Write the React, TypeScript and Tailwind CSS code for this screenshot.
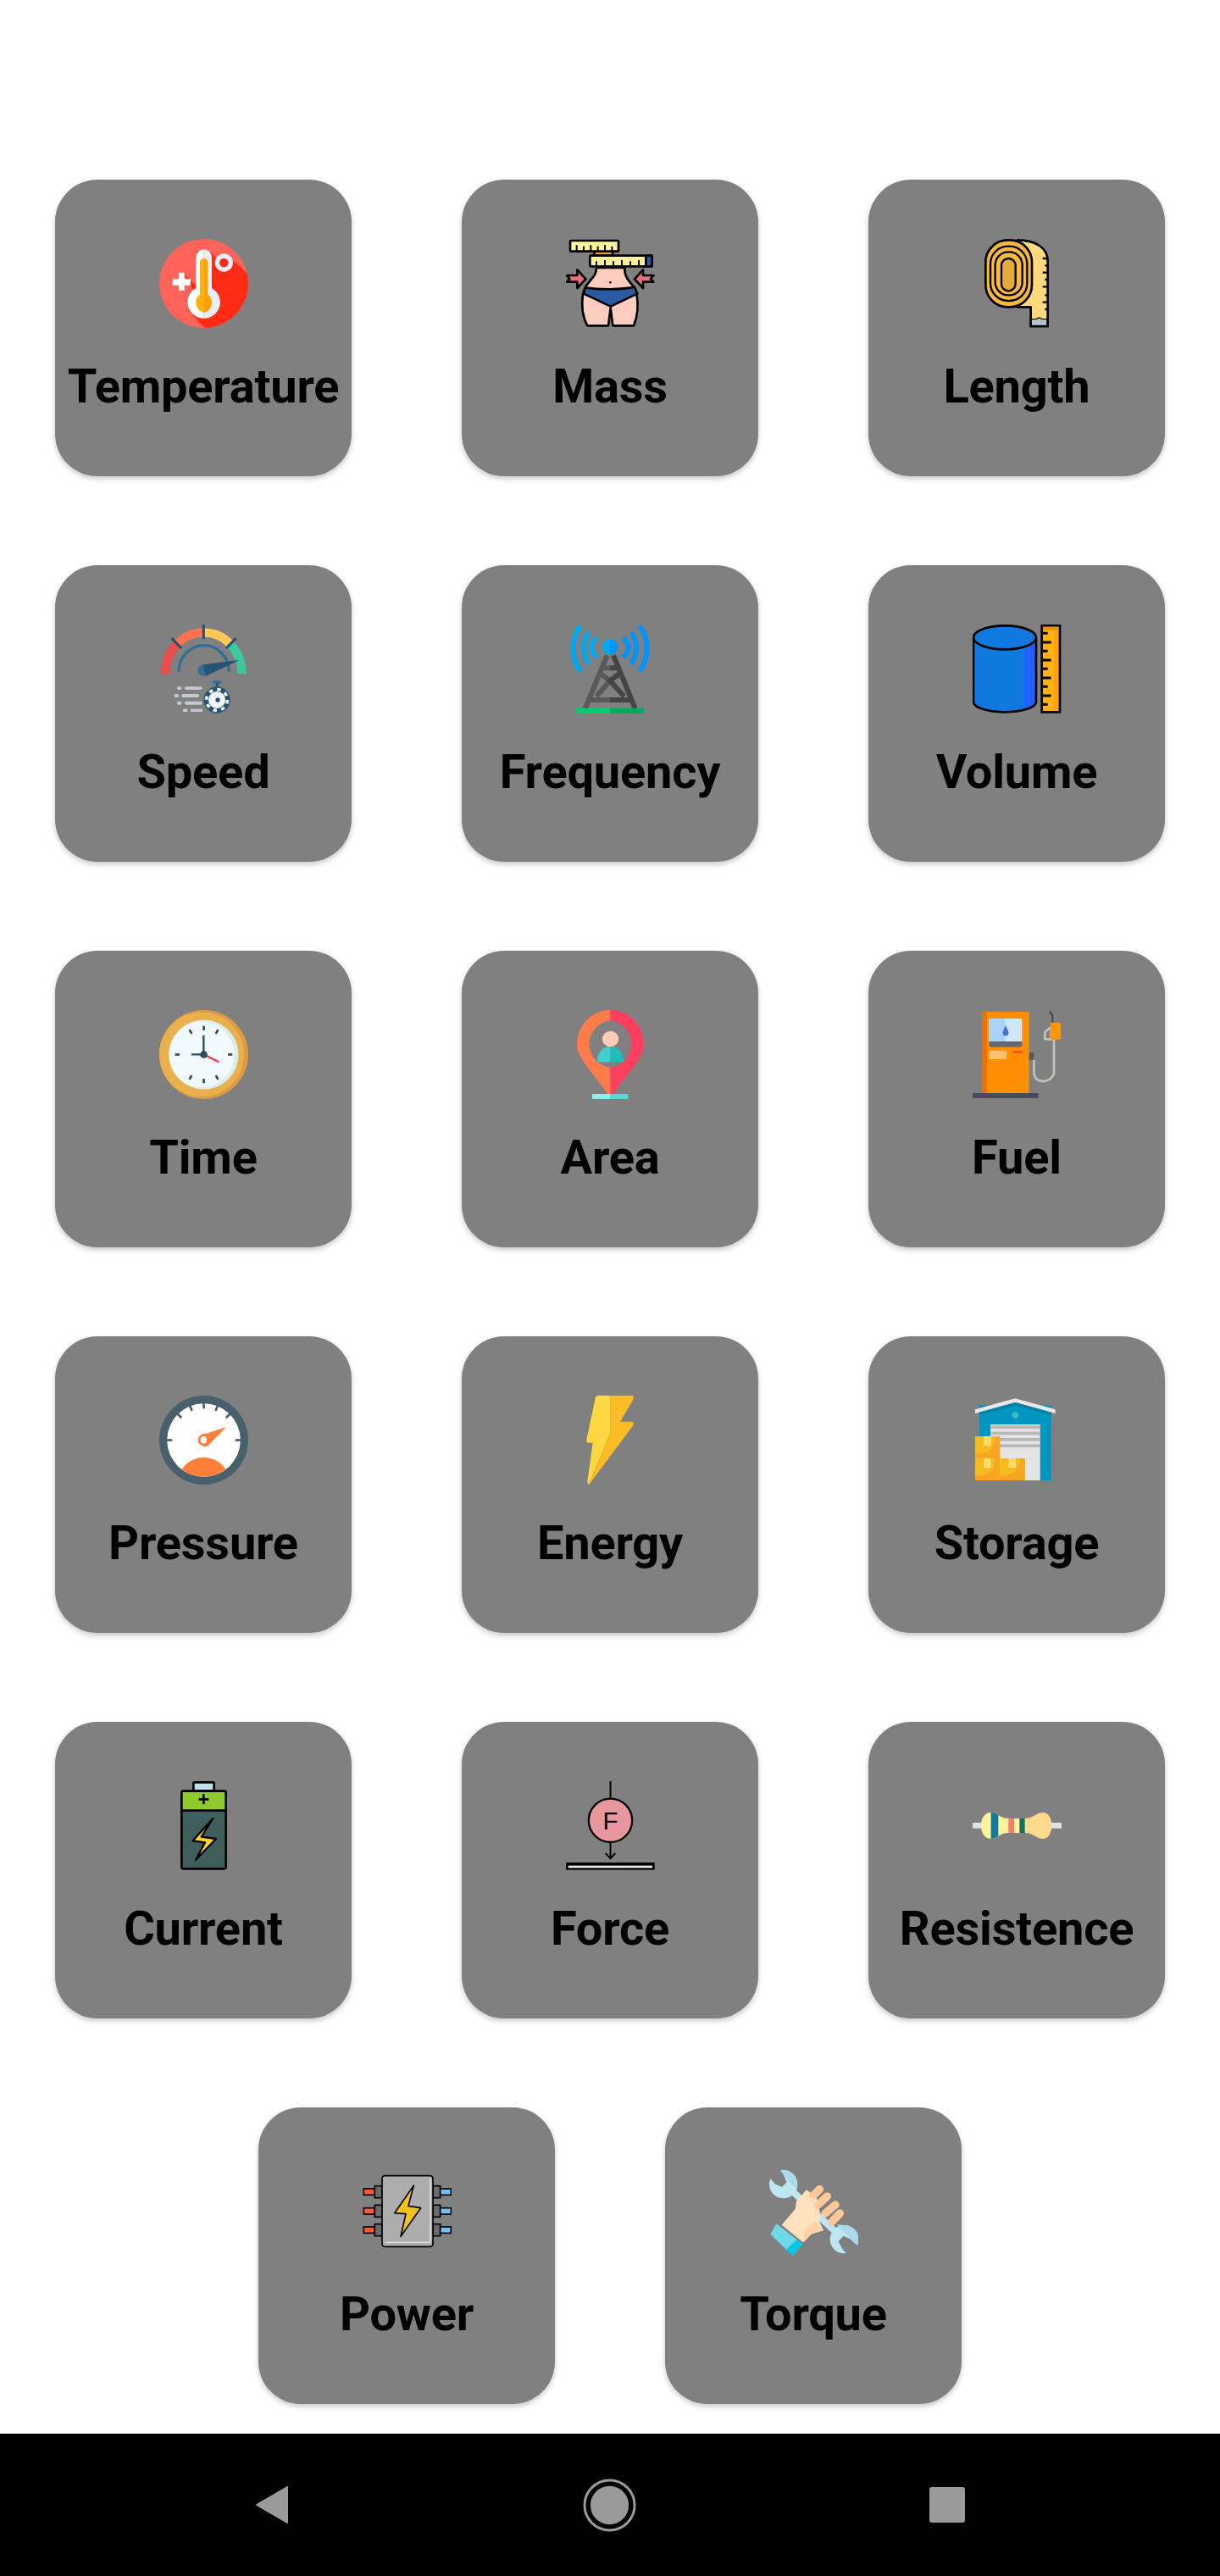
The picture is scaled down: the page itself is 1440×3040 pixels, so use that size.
import type { ReactNode } from "react";

const Svg = ({ vb = "0 0 315 315", children }: { vb?: string; children: ReactNode }) => (
  <svg viewBox={vb} className="w-[105px] h-[105px] block">{children}</svg>
);

const Thermo = () => (
  <Svg vb="81 66 315 315">
    <defs><clipPath id="thc"><circle cx="238.5" cy="223.5" r="157.5" /></clipPath></defs>
    <circle cx="238.5" cy="223.5" r="157.5" fill="#ff6359" />
    <path clipPath="url(#thc)" d="M250 390L185 320L200 245L165 187L212 232L212 110L262 112L288 138L310 120L340 140L400 195L420 390Z" fill="#ff2b14" />
    <path d="M211 290V131a28 28 0 0 1 28-28V347a57 57 0 0 1-28-107Z" fill="#fff" />
    <path d="M239 103a28 28 0 0 1 28 28V240a57 57 0 0 1-28 107Z" fill="#e9edf5" />
    <path d="M225 262V149a14 14 0 0 1 14-14V327a37 37 0 0 1-14-65Z" fill="#ffb20c" />
    <path d="M239 135a14 14 0 0 1 14 14V262a37 37 0 0 1-14 65Z" fill="#ff9f00" />
    <circle cx="310" cy="150" r="24" fill="#ff2b14" stroke="#e9edf5" strokeWidth="16" />
    <path d="M128 208h22v-23h20v23h22v22h-22v18h-20v-18h-22Z" fill="#fff" />
  </Svg>
);

const Mass = () => (
  <Svg vb="82 96 315 315">
    <g stroke="#000" strokeWidth="8" strokeLinejoin="round">
      <path d="M190 198C190 230 165 240 150 268L142 290C135 340 145 380 158 403H232L240 340L248 403H322C335 370 340 330 332 290L322 266C300 240 288 225 290 198Z" fill="#ffcdbf" />
      <path d="M150 268C200 276 280 276 325 266L335 290L240 335L145 290Z" fill="#2c5aa0" />
      <path d="M85 225H122V205L152 238L122 270V248H85L95 237Z" fill="#e66f80" />
      <path d="M392 225H355V205L325 238L355 270V248H392L382 237Z" fill="#e66f80" />
      <path d="M185 140H250L245 155H180Z" fill="#f0a030" />
      <rect x="97" y="102" width="171" height="38" rx="3" fill="#fff39a" />
      <rect x="167" y="155" width="220" height="38" rx="3" fill="#fff39a" />
      <rect x="365" y="155" width="22" height="38" fill="#2c5aa0" />
      <path d="M120 138V118M145 138V122M170 138V118M195 138V122M220 138V118M245 138V122M190 191V175M220 191V171M250 191V175M280 191V171M310 191V175M340 191V171" fill="none" strokeWidth="6" />
    </g>
    <circle cx="239" cy="250" r="4" fill="#000" />
  </Svg>
);

const Length = () => (
  <Svg vb="112 96 315 315">
    <path d="M270 100C340 100 378 130 378 175V405H318V337H270Z" fill="#ffd97a" stroke="#000" strokeWidth="8" strokeLinejoin="round" />
    <rect x="158" y="100" width="164" height="237" rx="78" fill="#f8b93d" stroke="#000" strokeWidth="8" />
    <rect x="175" y="122" width="130" height="193" rx="62" fill="#f8b93d" stroke="#000" strokeWidth="7" />
    <rect x="192" y="142" width="96" height="153" rx="46" fill="#f8b93d" stroke="#000" strokeWidth="7" />
    <rect x="214" y="165" width="50" height="115" rx="25" fill="#e5ab3a" stroke="#000" strokeWidth="7" />
    <path d="M360 165H378M368 190H378M360 215H378M368 240H378M360 265H378M368 295H378M360 320H378M368 345H378" stroke="#000" strokeWidth="7" />
    <path d="M322 385H338L348 378L358 385H374V403H322Z" fill="#b0c4d4" />
    <path d="M318 378V405H378V378" fill="none" stroke="#000" strokeWidth="8" />
    <path d="M322 380H338L348 374L358 380H374" fill="none" stroke="#000" strokeWidth="4" />
  </Svg>
);

const Speed = () => (
  <Svg vb="81 51 315 315">
    <g fill="none" strokeWidth="31">
      <path d="M102 225A136 146 0 0 1 142 122" stroke="#ee4b4b" />
      <path d="M142 122A136 146 0 0 1 238 79" stroke="#ff7350" />
      <path d="M238 79A136 146 0 0 1 334 122" stroke="#ffc857" />
      <path d="M334 122A136 146 0 0 1 374 225" stroke="#3cc9a0" />
    </g>
    <path d="M125 100L160 135M238 52V102M352 100L318 135" stroke="#234e6d" strokeWidth="9" />
    <path d="M150 218A88 92 0 0 1 328 218" fill="none" stroke="#336e96" strokeWidth="10" />
    <circle cx="238" cy="213" r="20" fill="#336e96" />
    <path d="M236 193L365 177L246 233Z" fill="#265474" />
    <g fill="#c4c9d1">
      <rect x="144" y="271" width="16" height="11" rx="5" />
      <rect x="171" y="271" width="62" height="11" rx="5" />
      <rect x="134" y="297" width="16" height="12" rx="5" />
      <rect x="160" y="297" width="62" height="12" rx="5" />
      <rect x="144" y="323" width="16" height="12" rx="5" />
      <rect x="171" y="323" width="62" height="12" rx="5" />
      <rect x="165" y="350" width="16" height="10" />
      <rect x="192" y="350" width="42" height="10" />
    </g>
    <rect x="270" y="250" width="31" height="10" rx="4" fill="#336e96" />
    <rect x="281" y="258" width="9" height="16" fill="#265474" />
    <circle cx="285" cy="318" r="47" fill="#265474" />
    <circle cx="285" cy="318" r="30" fill="#f1f4f8" />
    <circle cx="285" cy="318" r="37" fill="none" stroke="#f1f4f8" strokeWidth="11" strokeDasharray="13 16" />
    <circle cx="288" cy="318" r="8" fill="#265474" />
  </Svg>
);

const Freq = () => (
  <Svg vb="82 51 315 315">
    <g fill="none" strokeWidth="18" strokeLinecap="butt">
      <path d="M285 98Q321 133 285 168M313 78Q349 135 313 192M343 55Q395 135 343 218" stroke="#0094ff" />
      <path d="M191 98Q155 133 191 168M163 78Q127 135 163 192M133 55Q81 135 133 218" stroke="#00a8f0" />
    </g>
    <path d="M228 160L150 348M238 205H215M238 318H170M205 225L238 250L190 305" fill="none" stroke="#595959" strokeWidth="18" />
    <path d="M250 160L327 348M238 205H262M238 318H308M272 225L238 250L288 305" fill="none" stroke="#454545" strokeWidth="18" />
    <path d="M238 102a28 28 0 0 0 0 56Z" fill="#00a8f0" />
    <path d="M238 102a28 28 0 0 1 0 56Z" fill="#0094ff" />
    <rect x="118" y="348" width="120" height="18" fill="#00cc70" />
    <rect x="238" y="348" width="120" height="18" fill="#00ab60" />
  </Svg>
);

const Volume = () => (
  <Svg vb="112 51 315 315">
    <path d="M115 97V325C115 345 165 361 226 361C287 361 337 345 337 325V97Z" fill="#0f79e0" />
    <path d="M295 110H337V325C337 337 320 348 295 354Z" fill="#2060ff" />
    <path d="M115 97V325C115 345 165 361 226 361C287 361 337 345 337 325V97" fill="none" stroke="#000" strokeWidth="8" />
    <ellipse cx="226" cy="97" rx="111" ry="42" fill="#0f79e0" stroke="#000" strokeWidth="8" />
    <rect x="357" y="55" width="64" height="306" fill="#ffb211" />
    <rect x="400" y="55" width="21" height="306" fill="#ffa010" />
    <rect x="357" y="55" width="64" height="306" fill="none" stroke="#000" strokeWidth="8" />
    <rect x="361" y="59" width="56" height="12" fill="#e8900f" />
    <path d="M360 82H378M360 114H390M360 145H378M360 177H390M360 208H378M360 240H390M360 271H378M360 303H390M360 334H378" stroke="#000" strokeWidth="9" />
  </Svg>
);

const Time = () => (
  <Svg>
    <circle cx="157.5" cy="157.5" r="157.5" fill="#e09a45" />
    <circle cx="150" cy="157.5" r="150" fill="#eab04c" />
    <circle cx="157.5" cy="157.5" r="123" fill="#d8eef0" />
    <circle cx="150" cy="157.5" r="116" fill="#f3faff" />
    <g stroke="#2d4a63">
      {[0, 30, 90, 150, 180, 210, 270, 330].map((a) => (
        <line key={a} x1="157.5" y1="56" x2="157.5" y2="72" strokeWidth="8" transform={`rotate(${a} 157.5 157.5)`} />
      ))}
    </g>
    <path d="M157 157L211 184" stroke="#e04656" strokeWidth="7" />
    <path d="M157 89V157M114 157H157" stroke="#2d4a63" strokeWidth="7" />
    <circle cx="157.5" cy="157.5" r="13" fill="#2d4a63" />
  </Svg>
);

const Area = () => (
  <Svg>
    <path fillRule="evenodd" d="M157.5 0C90 0 39 55 39 124C39 170 110 240 150 300H157.5ZM157.5 37A84 84 0 0 0 157.5 204Z" fill="#ff7b4a" />
    <path fillRule="evenodd" d="M157.5 0C225 0 276 55 276 124C276 170 205 240 165 300H157.5ZM157.5 37A84 84 0 0 1 157.5 204Z" fill="#ff3f5f" />
    <ellipse cx="157.5" cy="102" rx="29" ry="28" fill="#ffcbb8" />
    <path d="M157.5 129C130 129 111 150 111 184H157.5Z" fill="#3fcfcf" />
    <path d="M157.5 129C185 129 204 150 204 184H157.5Z" fill="#22bcbc" />
    <rect x="93" y="297" width="65" height="18" rx="3" fill="#8cf0ee" />
    <rect x="157.5" y="297" width="63" height="18" rx="3" fill="#55d8d8" />
  </Svg>
);

const Fuel = () => (
  <Svg>
    <path d="M217 176V220C217 262 275 262 288 225V104" fill="none" stroke="#c2c2bc" strokeWidth="8" />
    <path d="M273 4L283 20V44" fill="none" stroke="#4a4a58" strokeWidth="7" />
    <path d="M256 102V78L278 60V104Z" fill="none" stroke="#c2c2bc" strokeWidth="8" />
    <rect x="276" y="44" width="36" height="60" rx="5" fill="#ff9500" />
    <rect x="35" y="6" width="165" height="288" rx="5" fill="#ff8f00" />
    <rect x="35" y="6" width="16" height="288" fill="#f07000" />
    <rect x="58" y="30" width="117" height="90" rx="6" fill="#cfe7fb" />
    <rect x="58" y="30" width="57" height="90" rx="6" fill="#a8d4f7" />
    <path d="M58 111H175V122a9 9 0 0 1-9 9H67a9 9 0 0 1-9-9Z" fill="#646875" />
    <path d="M117 54C108 74 104 80 108 86C112 93 122 93 126 86C130 80 126 74 117 54Z" fill="#4a72d0" />
    <rect x="58" y="144" width="63" height="30" rx="6" fill="#ffc46b" />
    <rect x="142" y="144" width="35" height="9" fill="#ea5f14" />
    <rect x="200" y="150" width="17" height="26" rx="3" fill="#555763" />
    <rect x="0" y="294" width="233" height="18" rx="3" fill="#4a4a5c" />
  </Svg>
);

const Pressure = () => (
  <Svg>
    <defs><clipPath id="pri"><circle cx="157.5" cy="157.5" r="130" /></clipPath></defs>
    <circle cx="157.5" cy="157.5" r="157.5" fill="#47606c" />
    <circle cx="157.5" cy="157.5" r="130" fill="#fff" />
    <circle cx="157.5" cy="312" r="93" fill="#ff7f3a" clipPath="url(#pri)" />
    <g stroke="#47606c" strokeWidth="8">
      {[-90, -45, 0, 45, 90, -22, 22].map((a) => (
        <line key={a} x1="157.5" y1="24" x2="157.5" y2="46" transform={`rotate(${a} 157.5 157.5)`} />
      ))}
    </g>
    <path d="M237 111L178 172C172 185 148 182 138 165C132 150 150 130 165 135Z" fill="#ff7f3a" />
    <ellipse cx="157" cy="157" rx="11" ry="13" fill="#fff" />
  </Svg>
);

const Energy = () => (
  <Svg>
    <path d="M157.5 0H114Q105 0 104 10L73 156Q72 167 82 167H95L76 305Q78 320 84 310L157.5 130Z" fill="#ffd740" />
    <path d="M157.5 0H232Q242 0 239 12L192 92H232Q242 94 239 104L84 312L157.5 130Z" fill="#fbbc25" />
  </Svg>
);

const Storage = () => (
  <Svg>
    <rect x="24" y="34" width="254" height="266" fill="#0096c0" />
    <path d="M151 10L293 49V63L151 24L9 63V49Z" fill="#e8e8e8" />
    <path d="M151 24L278 59V70L151 35L24 70V59Z" fill="#0083aa" />
    <circle cx="151" cy="69" r="11" fill="#45bcbc" />
    <rect x="63" y="102" width="176" height="198" fill="#e4e4e4" />
    <g fill="#b8b8b8">
      <rect x="63" y="106" width="176" height="11" />
      <rect x="63" y="128" width="176" height="11" />
      <rect x="63" y="150" width="176" height="11" />
      <rect x="63" y="172" width="176" height="11" />
    </g>
    {[[9, 144], [9, 222], [97, 222]].map(([x, y]) => (
      <g key={`${x}-${y}`}>
        <rect x={x} y={y} width="88" height="78" fill="#f8bb1e" />
        <path d={`M${x + 70} ${y}H${x + 88}V${y + 78}H${x}V${y + 62}C${x + 40} ${y + 62} ${x + 70} ${y + 50} ${x + 70} ${y}Z`} fill="#f5a623" />
        <rect x={x + 30} y={y} width="26" height="34" fill="#fbdc6a" />
      </g>
    ))}
  </Svg>
);

const Current = () => (
  <Svg>
    <rect x="121" y="4" width="73" height="30" rx="4" fill="#bfe0e6" stroke="#000" strokeWidth="8" />
    <path d="M79 104V41Q79 35 85 35H230Q236 35 236 41V104Z" fill="#8ecb2a" />
    <path d="M79 104H236V304Q236 310 230 310H85Q79 310 79 304Z" fill="#3f5f5c" />
    <path d="M79 104V41Q79 35 85 35H230Q236 35 236 41V304Q236 310 230 310H85Q79 310 79 304ZM79 104H236" fill="none" stroke="#000" strokeWidth="8" />
    <path d="M157 45V82M140 64H175" stroke="#000" strokeWidth="8" />
    <path d="M190 132L119 211L162 217L129 279L201 204L149 197Z" fill="#ffd32a" stroke="#000" strokeWidth="7" strokeLinejoin="round" />
  </Svg>
);

const Force = () => (
  <Svg>
    <path d="M157.5 0V62M157.5 218V272M140 255L157.5 274L175 255" fill="none" stroke="#000" strokeWidth="6" />
    <circle cx="157.5" cy="139" r="77" fill="#e8979f" stroke="#000" strokeWidth="7" />
    <text x="157.5" y="171" textAnchor="middle" fontSize="88" fontFamily="'Liberation Sans', sans-serif" fill="#000">F</text>
    <rect x="0" y="288" width="314" height="26" fill="#000" />
    <rect x="8" y="299" width="298" height="8" fill="#eef2f2" />
  </Svg>
);

const Resistor = () => (
  <Svg>
    <defs>
      <clipPath id="rsb">
        <path d="M64 111C90 111 95 132 127 132H185C215 132 225 111 250 111C270 111 280 135 280 157C280 180 270 204 250 204C225 204 215 183 185 183H127C95 183 90 204 64 204C40 204 30 180 30 157C30 135 40 111 64 111Z" />
      </clipPath>
    </defs>
    <rect x="0" y="147" width="315" height="20" fill="#dce6ea" />
    <g clipPath="url(#rsb)">
      <rect x="30" y="105" width="160" height="105" fill="#fff39a" />
      <rect x="185" y="105" width="100" height="105" fill="#ffd98c" />
      <rect x="65" y="105" width="26" height="105" fill="#137a9e" />
      <rect x="127" y="105" width="20" height="105" fill="#ff7a6a" />
      <rect x="166" y="105" width="19" height="105" fill="#137060" />
    </g>
  </Svg>
);

const Power = () => (
  <Svg>
    <g stroke="#000" strokeWidth="5">
      {[89, 157, 224].map((y) => (
        <g key={y}>
          <rect x="4" y={y - 11} width="39" height="22" fill="#ff5a36" />
          <rect x="43" y={y - 21} width="26" height="42" fill="#6b6b6b" />
          <rect x="249" y={y - 21} width="26" height="42" fill="#6b6b6b" />
          <rect x="275" y={y - 11} width="38" height="22" fill="#74c1ef" />
        </g>
      ))}
    </g>
    <rect x="69" y="32" width="180" height="251" rx="10" fill="#adadad" stroke="#000" strokeWidth="5" />
    <path d="M240 42V268M82 268H238" fill="none" stroke="#e6e6e6" strokeWidth="4" />
    <path d="M181 67L113 164L153 167L135 247L206 146L162 139Z" fill="#f5c21b" stroke="#000" strokeWidth="5" strokeLinejoin="round" />
  </Svg>
);

const Torque = () => (
  <Svg>
    <circle cx="50" cy="62" r="50" fill="#bde6f3" />
    <path d="M40 12A50 50 0 0 1 95 40L100 80L80 65Z" fill="#a9dbea" />
    <path d="M37 9L-12 -5L-15 39L1 39L22 62L45 72L62 55L50 28Z" fill="#808080" />
    <circle cx="265" cy="257" r="50" fill="#bde6f3" />
    <path d="M312 279A50 50 0 0 0 268 207L240 205L272 240Z" fill="#a9dbea" />
    <path d="M312 279L335 295L320 330L279 314L258 290L245 265L262 245L285 255Z" fill="#808080" />
    <path d="M62 68L250 245" stroke="#bde6f3" strokeWidth="24" />
    <path d="M44 206L92 150L96 122L132 82L165 105L178 155L178 195L192 226L150 238L120 268Z" fill="#ffe2bd" />
    <path d="M120 268L150 238L190 226L165 195L125 225Z" fill="#ffd2a8" />
    <path d="M178 80L152 106M205 105L172 135M234 135L198 165M250 165L222 195" stroke="#ffc896" strokeWidth="28" strokeLinecap="round" />
    <path d="M133 90C128 115 150 125 170 118" fill="none" stroke="#ffe2bd" strokeWidth="18" />
    <path d="M25 202L118 274L83 315L4 239Z" fill="#6dd8e8" strokeLinejoin="round" />
    <path d="M98 257L118 274L83 315L59 294Z" fill="#00c8e0" />
  </Svg>
);

const Card = ({ label, icon }: { label: string; icon: ReactNode }) => (
  <div className="w-[350px] h-[350px] rounded-[50px] bg-[#808080] shadow-[0_3px_6px_rgba(0,0,0,0.22)] flex flex-col items-center pt-[70px]">
    {icon}
    <div className="mt-[36px] text-[56px] leading-[66px] tracking-[-0.2px] font-bold text-black whitespace-nowrap font-['Roboto',sans-serif]">
      {label}
    </div>
  </div>
);

const rows: [string, ReactNode][][] = [
  [["Temperature", <Thermo />], ["Mass", <Mass />], ["Length", <Length />]],
  [["Speed", <Speed />], ["Frequency", <Freq />], ["Volume", <Volume />]],
  [["Time", <Time />], ["Area", <Area />], ["Fuel", <Fuel />]],
  [["Pressure", <Pressure />], ["Energy", <Energy />], ["Storage", <Storage />]],
  [["Current", <Current />], ["Force", <Force />], ["Resistence", <Resistor />]],
  [["Power", <Power />], ["Torque", <Torque />]],
];

export default function App() {
  return (
    <div className="w-[1440px] h-[3040px] bg-white flex flex-col overflow-hidden">
      <div className="flex-1 flex flex-col gap-[105px] pt-[212px]">
        {rows.map((row, i) => (
          <div key={i} className="flex justify-center gap-[130px]">
            {row.map(([label, icon]) => (
              <Card key={label} label={label} icon={icon} />
            ))}
          </div>
        ))}
      </div>
      <div className="h-[168px] bg-black flex items-center justify-between px-[301px]">
        <svg viewBox="0 0 40 46" className="w-[40px] h-[46px] block">
          <path d="M38 2L2 23L38 44Z" fill="#9a9a9a" stroke="#9a9a9a" strokeWidth="2" strokeLinejoin="round" />
        </svg>
        <svg viewBox="0 0 64 64" className="w-[63px] h-[63px] block">
          <circle cx="32" cy="32" r="30" fill="none" stroke="#9a9a9a" strokeWidth="3" />
          <circle cx="32" cy="32" r="23" fill="#9a9a9a" />
        </svg>
        <div className="w-[42px] h-[42px] rounded-[3px] bg-[#9a9a9a]" />
      </div>
    </div>
  );
}
